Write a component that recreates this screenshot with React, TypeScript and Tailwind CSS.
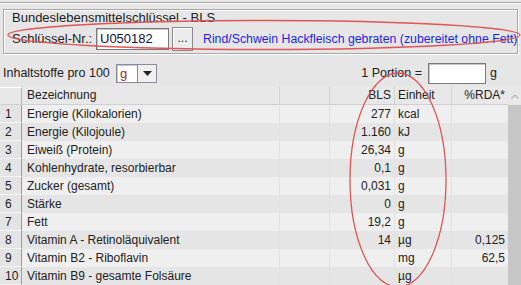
import React from "react"

const rows = [
  { n: 1, name: "Energie (Kilokalorien)", bls: "277", unit: "kcal", rda: "" },
  { n: 2, name: "Energie (Kilojoule)", bls: "1.160", unit: "kJ", rda: "" },
  { n: 3, name: "Eiweiß (Protein)", bls: "26,34", unit: "g", rda: "" },
  { n: 4, name: "Kohlenhydrate, resorbierbar", bls: "0,1", unit: "g", rda: "" },
  { n: 5, name: "Zucker (gesamt)", bls: "0,031", unit: "g", rda: "" },
  { n: 6, name: "Stärke", bls: "0", unit: "g", rda: "" },
  { n: 7, name: "Fett", bls: "19,2", unit: "g", rda: "" },
  { n: 8, name: "Vitamin A - Retinoläquivalent", bls: "14", unit: "µg", rda: "0,125" },
  { n: 9, name: "Vitamin B2 - Riboflavin", bls: "", unit: "mg", rda: "62,5" },
  { n: 10, name: "Vitamin B9 - gesamte Folsäure", bls: "", unit: "µg", rda: "" },
]

export default function App() {
  return (
    <div
      className="relative w-[521px] h-[285px] overflow-hidden bg-[#e6e6e6] text-[#222] text-[12.5px]"
      style={{ fontFamily: '"Liberation Sans", Arial, sans-serif' }}
    >
      {/* top edge */}
      <div className="mt-[2px] border-t border-[#a4a4a4] border-b border-b-white h-0" />

      {/* group box */}
      <div className="mx-[3px] mt-[5px] h-[45px] border border-[#a8a8a8] shadow-[inset_1px_1px_0_#fff,1px_1px_0_#fff] px-[8px] pt-[1px] flex flex-col">
        <div className="leading-[14px] h-[14px] text-[13px]">Bundeslebensmittelschlüssel - BLS</div>
        <div className="flex items-center mt-[2px] h-[24px]">
          <span className="w-[84px] shrink-0 text-[13px]">Schlüssel-Nr.:</span>
          <div className="w-[73px] shrink-0 h-[22px] bg-white border border-[#7a7a7a] shadow-[inset_1px_1px_0_#c8c8c8] flex items-center pl-[3px] text-[13px] text-[#101040]">
            U050182
          </div>
          <div className="ml-[3px] shrink-0 w-[21px] h-[24px] border border-[#8a8a8a] bg-[#ececec] shadow-[inset_1px_1px_0_#fff] flex items-center justify-center text-[12px] leading-none pb-[2px]">
            ...
          </div>
          <span className="ml-[10px] shrink-0 text-[12.3px] text-[#1f1fe6] whitespace-nowrap">
            Rind/Schwein Hackfleisch gebraten (zubereitet ohne Fett)
          </span>
        </div>
      </div>

      {/* per 100 row */}
      <div className="flex items-center h-[22px] mt-[8px] pl-[3px] pr-[24px]">
        <span className="w-[113px]">Inhaltstoffe pro 100</span>
        <div className="flex h-[19px] border border-[#8a8a9a]">
          <div className="w-[21px] bg-white border-r border-[#8a8a9a] shadow-[inset_1px_1px_0_#c0c8e0] pl-[3px] text-[#a0302a] text-[13px] leading-[17px]">
            g
          </div>
          <div className="w-[18px] bg-[#f0f0f0] flex items-center justify-center">
            <svg width="9" height="5" viewBox="0 0 9 5">
              <path d="M0 0 H9 L4.5 5 Z" fill="#222" />
            </svg>
          </div>
        </div>
        <span className="ml-auto mr-[6px]">1 Portion =</span>
        <div className="w-[58px] h-[21px] bg-white border border-[#7a7a7a] shadow-[inset_1px_1px_0_#c8c8c8]" />
        <span className="ml-[4px]">g</span>
      </div>

      {/* table */}
      <div className="mt-[3px] flex text-[12px]">
        <div className="flex-1 flex flex-col">
          <div className="flex h-[18px] bg-[#e8e8e8] border-b border-[#d0d0d0] leading-[17px]">
            <div className="w-[22px] border-r border-[#b8b8b8] border-t border-t-white" />
            <div className="w-[258px] pl-[5px] border-r border-[#d4d4d4]">Bezeichnung</div>
            <div className="w-[50px] border-r border-[#d4d4d4]" />
            <div className="w-[65px] pr-[3px] text-right border-r border-[#d4d4d4]">BLS</div>
            <div className="w-[57px] pl-[3px] border-r border-[#d4d4d4]">Einheit</div>
            <div className="w-[56px] pr-[3px] text-right">%RDA*</div>
          </div>
          {rows.map((r) => (
            <div key={r.n} className="flex h-[18px] leading-[18px]">
              <div className="w-[22px] pl-[5px] bg-[#e4e4e4] border-r border-[#9c9c9c] border-b border-b-[#f4f4f4]">
                {r.n}
              </div>
              <div
                className={`flex flex-1 ${r.n % 2 === 1 ? "bg-[#efefef]" : "bg-[#e5e5e5]"}`}
              >
                <div className="w-[258px] pl-[5px] border-r border-[#e2e2e2] whitespace-nowrap">{r.name}</div>
                <div className="w-[50px] border-r border-[#e2e2e2]" />
                <div className="w-[65px] pr-[3px] text-right border-r border-[#e2e2e2]">{r.bls}</div>
                <div className="w-[57px] pl-[3px] border-r border-[#e2e2e2]">{r.unit}</div>
                <div className="w-[56px] pr-[3px] text-right">{r.rda}</div>
              </div>
            </div>
          ))}
        </div>
        {/* scrollbar */}
        <div className="w-[13px] flex flex-col">
          <div className="h-[18px] bg-[#e8e8e8] flex items-center justify-center">
            <svg width="8" height="5" viewBox="0 0 8 5">
              <path d="M0.5 4.5 L4 1 L7.5 4.5" fill="none" stroke="#b8b8b8" strokeWidth="1.2" />
            </svg>
          </div>
          <div className="flex-1 bg-[#c6c6c6]" />
        </div>
      </div>

      {/* red annotation ellipses */}
      <svg className="absolute inset-0 pointer-events-none" width="521" height="285" viewBox="0 0 521 285">
        <ellipse cx="264" cy="35" rx="256" ry="14.5" fill="none" stroke="#e05555" strokeWidth="1.3" />
        <ellipse cx="398" cy="180" rx="48" ry="107" fill="none" stroke="#e05555" strokeWidth="1.3" />
      </svg>
    </div>
  )
}
